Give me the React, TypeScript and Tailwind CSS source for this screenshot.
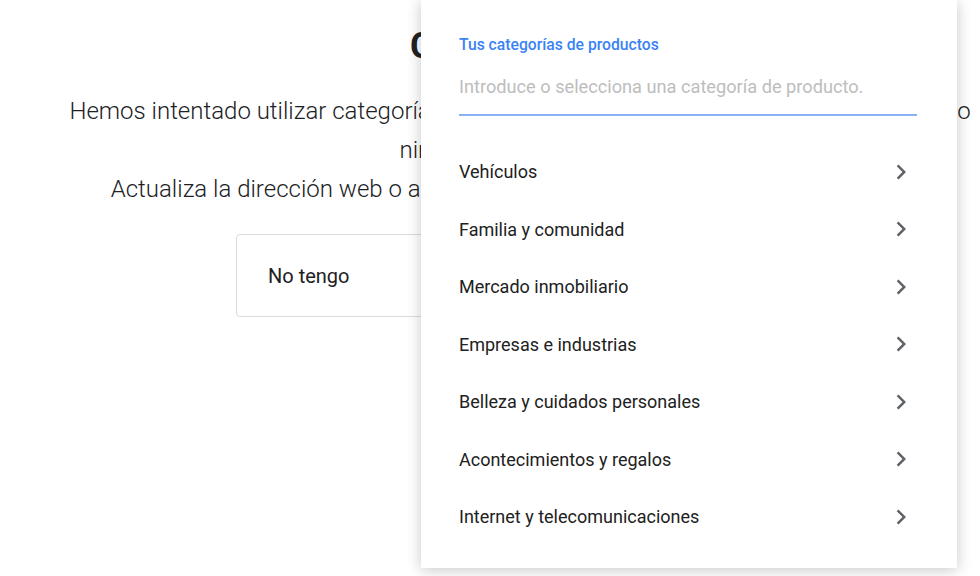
const categories = [
  "Vehículos",
  "Familia y comunidad",
  "Mercado inmobiliario",
  "Empresas e industrias",
  "Belleza y cuidados personales",
  "Acontecimientos y regalos",
  "Internet y telecomunicaciones",
]

const Chevron = () => (
  <svg width="30" height="30" viewBox="0 0 24 24" className="fill-[#5f6368]">
    <path d="M10 6L8.59 7.41 13.17 12l-4.58 4.59L10 18l6-6z" />
  </svg>
)

export default function App() {
  return (
    <div className="relative h-[576px] w-[980px] overflow-hidden bg-white font-['Roboto',sans-serif]">
      {/* page behind the menu */}
      <div className="flex w-[1040px] flex-col items-center pt-[25px] text-center">
        <h1 className="text-[36px] font-bold leading-[42px] text-[#202124]">Catálogo web</h1>
        <p className="mt-[25px] text-[24px] font-light leading-[39px] text-[#202124]">
          Hemos intentado utilizar categorías de productos basándonos en tu sitio web, pero no
          <br />
          ninguna era pertinente.
          <br />
          Actualiza la dirección web o añade tus categorías de productos manualmente.
        </p>
        <div className="mt-[25px] flex gap-4">
          <div className="flex h-[83px] w-[276px] items-center rounded border border-[#dadce0] px-[31px] text-[20px] text-[#202124]">
            No tengo
          </div>
          <div className="flex h-[83px] w-[276px] items-center rounded border border-[#dadce0] px-[31px] text-[20px] text-[#202124]">
            Tengo una web
          </div>
        </div>
      </div>

      {/* category menu */}
      <div className="absolute left-[421px] top-0 flex h-[568px] w-[536px] flex-col bg-white pl-[38px] pr-[40px] pt-[34px] shadow-[0_2px_14px_rgba(0,0,0,0.22)]">
        <div className="text-[15.7px] font-medium leading-[22px] text-[#3b82f6]">Tus categorías de productos</div>
        <div className="flex h-[60px] items-center border-b-2 border-[#8ab0f5] pt-[3px]">
          <span className="text-[18.2px] text-[#bdbdbd]">Introduce o selecciona una categoría de producto.</span>
        </div>
        <ul className="mt-[27px] flex flex-col">
          {categories.map((c) => (
            <li key={c} className="flex h-[57.5px] items-center justify-between text-[18px] text-[#212121]">
              <span>{c}</span>
              <span className="mr-[1px]">
                <Chevron />
              </span>
            </li>
          ))}
        </ul>
      </div>
    </div>
  )
}
